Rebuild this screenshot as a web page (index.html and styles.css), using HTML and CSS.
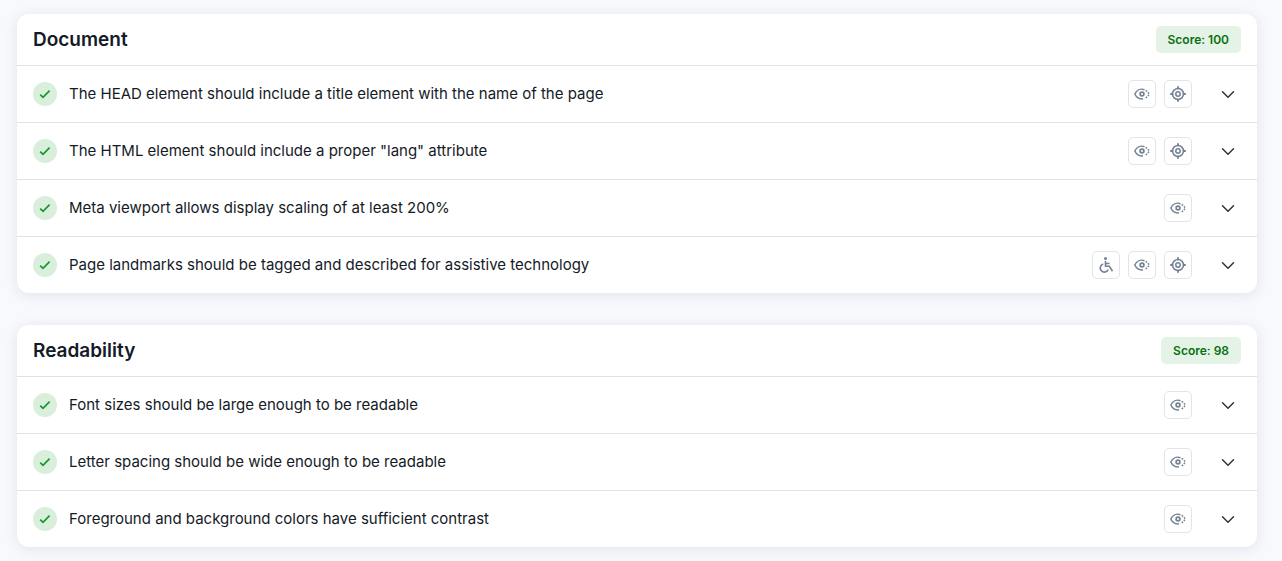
FILE: index.html
```html
<!DOCTYPE html>
<html lang="en">
<head>
<meta charset="utf-8">
<meta name="viewport" content="width=device-width, initial-scale=1">
<title>Accessibility report</title>
<link rel="stylesheet" href="styles.css">
</head>
<body>
<svg class="sprite" aria-hidden="true">
  <symbol id="check" viewBox="0 0 24 24"><path d="M7.2 12.600l2.800 2.800 6.600-6.800" fill="none" stroke="currentColor" stroke-width="1.700"/></symbol>
  <symbol id="chevron" viewBox="0 0 24 24"><path d="M6.500 9.800l5.500 5.500 5.500-5.500" fill="none" stroke="currentColor" stroke-width="1.500" stroke-linecap="round" stroke-linejoin="round"/></symbol>
  <symbol id="eye" viewBox="0 0 16 16"><g fill="none" stroke="currentColor" stroke-width="1.500"><path d="M10.500 3.700C6.500 2.200 2.700 4.100.8 8c1.700 3.500 4.500 5.300 8.200 4.800"/><circle cx="8" cy="8" r="1.900" stroke-width="1.700"/><path d="M11.700 4.300c1.500.9 2.700 2.200 3.500 3.700-1 2-2.500 3.500-4.700 4.400" stroke-dasharray="1.700 1.200"/></g></symbol>
  <symbol id="target" viewBox="0 0 16 16"><g fill="none" stroke="currentColor" stroke-width="1.500"><circle cx="8" cy="8" r="5.500"/><circle cx="8" cy="8" r="2.200"/><path d="M8 .2v3M8 12.800v3M.2 8h3M12.800 8h3" stroke-width="1.800"/></g></symbol>
  <symbol id="wheelchair" viewBox="0 0 16 16"><circle cx="7.500" cy="1.600" r="1.500" fill="currentColor"/><path d="M7.500 4v5.300h3.800l3.200 4.900M7.800 6.500h3.800M5.200 7.100a4.100 4.100 0 1 0 5 5.400" fill="none" stroke="currentColor" stroke-width="1.600"/></symbol>
</svg>
<main class="report">
  <section class="card">
    <header class="card-header"><h2 class="card-title">Document</h2><span class="score">Score: 100</span></header>
    <ul class="checks">
      <li class="check">
        <svg class="status" role="img" aria-label="Passed"><use href="#check"/></svg>
        <span class="check-name" id="c1">The HEAD element should include a title element with the name of the page</span>
        <span class="tags"><span class="tag"><svg class="tag-icon"><use href="#eye"/></svg></span><span class="tag"><svg class="tag-icon"><use href="#target"/></svg></span></span>
        <button class="toggle" type="button" aria-expanded="false" aria-labelledby="c1"><svg class="chevron"><use href="#chevron"/></svg></button>
      </li>
      <li class="check">
        <svg class="status" role="img" aria-label="Passed"><use href="#check"/></svg>
        <span class="check-name" id="c2">The HTML element should include a proper "lang" attribute</span>
        <span class="tags"><span class="tag"><svg class="tag-icon"><use href="#eye"/></svg></span><span class="tag"><svg class="tag-icon"><use href="#target"/></svg></span></span>
        <button class="toggle" type="button" aria-expanded="false" aria-labelledby="c2"><svg class="chevron"><use href="#chevron"/></svg></button>
      </li>
      <li class="check">
        <svg class="status" role="img" aria-label="Passed"><use href="#check"/></svg>
        <span class="check-name" id="c3">Meta viewport allows display scaling of at least 200%</span>
        <span class="tags"><span class="tag"><svg class="tag-icon"><use href="#eye"/></svg></span></span>
        <button class="toggle" type="button" aria-expanded="false" aria-labelledby="c3"><svg class="chevron"><use href="#chevron"/></svg></button>
      </li>
      <li class="check">
        <svg class="status" role="img" aria-label="Passed"><use href="#check"/></svg>
        <span class="check-name" id="c4">Page landmarks should be tagged and described for assistive technology</span>
        <span class="tags"><span class="tag"><svg class="tag-icon"><use href="#wheelchair"/></svg></span><span class="tag"><svg class="tag-icon"><use href="#eye"/></svg></span><span class="tag"><svg class="tag-icon"><use href="#target"/></svg></span></span>
        <button class="toggle" type="button" aria-expanded="false" aria-labelledby="c4"><svg class="chevron"><use href="#chevron"/></svg></button>
      </li>
    </ul>
  </section>
  <section class="card">
    <header class="card-header"><h2 class="card-title">Readability</h2><span class="score">Score: 98</span></header>
    <ul class="checks">
      <li class="check">
        <svg class="status" role="img" aria-label="Passed"><use href="#check"/></svg>
        <span class="check-name" id="c5">Font sizes should be large enough to be readable</span>
        <span class="tags"><span class="tag"><svg class="tag-icon"><use href="#eye"/></svg></span></span>
        <button class="toggle" type="button" aria-expanded="false" aria-labelledby="c5"><svg class="chevron"><use href="#chevron"/></svg></button>
      </li>
      <li class="check">
        <svg class="status" role="img" aria-label="Passed"><use href="#check"/></svg>
        <span class="check-name" id="c6">Letter spacing should be wide enough to be readable</span>
        <span class="tags"><span class="tag"><svg class="tag-icon"><use href="#eye"/></svg></span></span>
        <button class="toggle" type="button" aria-expanded="false" aria-labelledby="c6"><svg class="chevron"><use href="#chevron"/></svg></button>
      </li>
      <li class="check">
        <svg class="status" role="img" aria-label="Passed"><use href="#check"/></svg>
        <span class="check-name" id="c7">Foreground and background colors have sufficient contrast</span>
        <span class="tags"><span class="tag"><svg class="tag-icon"><use href="#eye"/></svg></span></span>
        <button class="toggle" type="button" aria-expanded="false" aria-labelledby="c7"><svg class="chevron"><use href="#chevron"/></svg></button>
      </li>
    </ul>
  </section>
</main>
</body>
</html>
```
FILE: styles.css
```css
* { box-sizing: border-box; }
body {
  margin: 0;
  background: #f8f9fd;
  color: #141a26;
  font: 15px/24px Inter, "Liberation Sans", sans-serif;
}
.sprite { display: none; }
.report {
  display: flex;
  flex-direction: column;
  gap: 32px;
  padding: 14px 25px 14px 17px;
}
.card {
  background: #fff;
  border-radius: 12px;
  box-shadow: 0 2px 14px rgba(30, 35, 80, 0.1);
}
.card-header {
  display: flex;
  align-items: center;
  justify-content: space-between;
  padding: 12px 16px;
}
.card-title {
  margin: 0;
  font-size: 19px;
  line-height: 27px;
  font-weight: 600;
}
.score {
  padding: 0 12px;
  border-radius: 5px;
  background: #e5f3e6;
  color: #08710f;
  font-size: 12px;
  line-height: 27px;
  font-weight: 600;
}
.checks { margin: 0; padding: 0; list-style: none; }
.check {
  display: flex;
  align-items: center;
  padding: 14px 16px;
  border-top: 1px solid #e1e2e8;
}
.status {
  flex: none;
  width: 24px;
  height: 24px;
  margin-right: 12px;
  border-radius: 50%;
  background: #d9eedb;
  color: #18982a;
}
.check-name { flex: 1; }
.tags { display: flex; gap: 8px; margin-right: 23px; }
.tag {
  display: grid;
  place-items: center;
  width: 28px;
  height: 28px;
  border: 1px solid #e3e4e9;
  border-radius: 5px;
  color: #748094;
}
.tag-icon { width: 16px; height: 16px; }
.toggle {
  display: grid;
  place-items: center;
  width: 26px;
  height: 28px;
  padding: 0;
  border: 0;
  background: none;
  color: #30343e;
  cursor: pointer;
}
.chevron { width: 24px; height: 24px; }
```
